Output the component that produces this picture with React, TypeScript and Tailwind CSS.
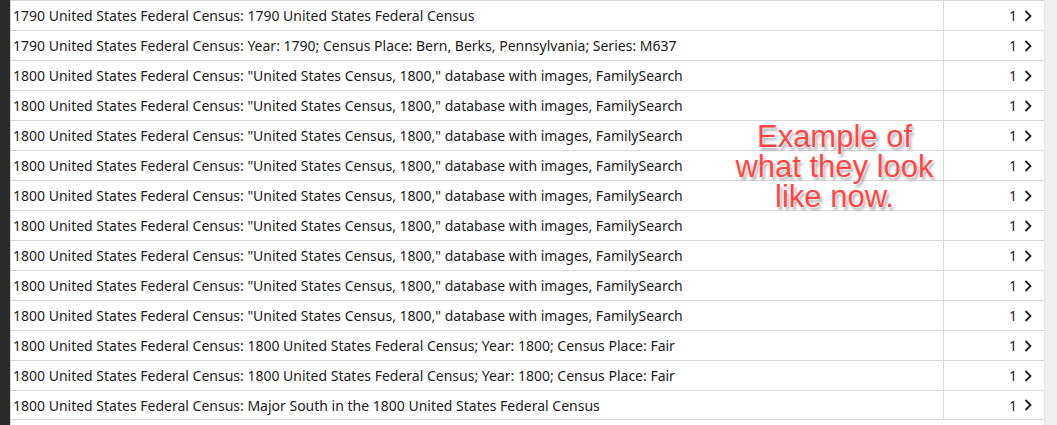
const rows = [
  "1790 United States Federal Census: 1790 United States Federal Census",
  "1790 United States Federal Census: Year: 1790; Census Place: Bern, Berks, Pennsylvania; Series: M637",
  ...Array(9).fill('1800 United States Federal Census: "United States Census, 1800," database with images, FamilySearch'),
  "1800 United States Federal Census: 1800 United States Federal Census; Year: 1800; Census Place: Fair",
  "1800 United States Federal Census: 1800 United States Federal Census; Year: 1800; Census Place: Fair",
  "1800 United States Federal Census: Major South in the 1800 United States Federal Census",
];

function Chevron() {
  return (
    <svg width="10" height="14" viewBox="0 0 10 14" className="text-[#1f1f1f]">
      <path d="M2.5 2 L7.5 7 L2.5 12" fill="none" stroke="currentColor" strokeWidth="1.8" />
    </svg>
  );
}

export default function App() {
  return (
    <div className="relative flex h-[425px] w-[1057px] overflow-hidden bg-white font-['Segoe_UI','Noto_Sans',sans-serif] text-[14px] text-[#1b1b1b]">
      <div className="w-[10px] shrink-0 bg-[#2b2b2b]" />
      <div className="flex w-[1034px] flex-col border-l border-[#d4d4d4]">
        {rows.map((r, i) => (
          <div key={i} className="flex h-[30px] shrink-0 border-t border-[#d9d9d9] last:border-b">
            <div className="flex w-[933px] items-center overflow-hidden whitespace-nowrap border-r border-[#d9d9d9] pl-[2px]">
              {r}
            </div>
            <div className="flex flex-1 items-center justify-end gap-[6px] pr-[11px]">
              <span>1</span>
              <Chevron />
            </div>
          </div>
        ))}
      </div>
      <div className="flex-1 border-l border-[#e3e3e3] bg-[#f0f0f0]" />
      <div className="absolute left-[733px] top-[122px] w-[203px] text-center font-['Liberation_Sans',Arial,sans-serif] text-[31px] leading-[30px] text-[#ff4545] [text-shadow:0_0_2px_#fff,0_0_2px_#fff,2px_3px_3px_rgba(0,0,0,0.35)]">
        Example of
        <br />
        what they look
        <br />
        like now.
      </div>
    </div>
  );
}
